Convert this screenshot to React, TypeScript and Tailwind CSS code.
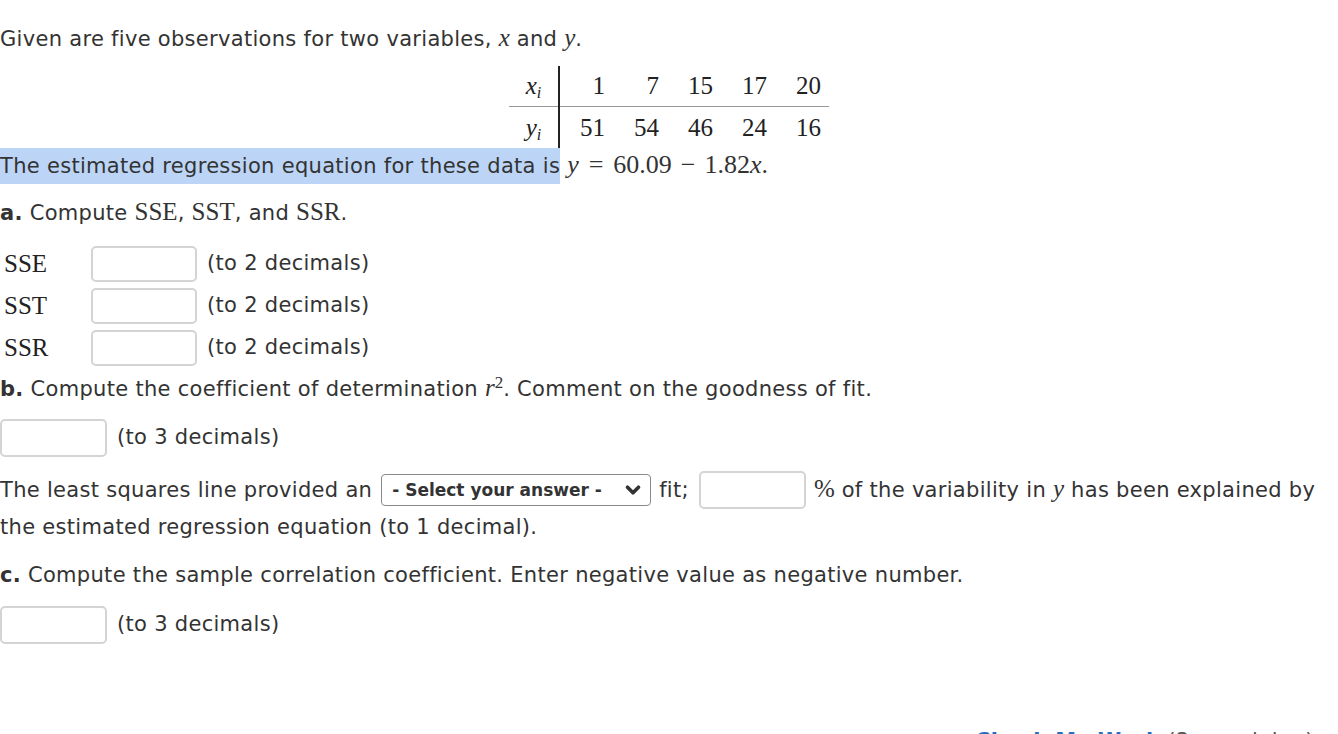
import React from 'react';
import { ChevronDown } from 'lucide-react';

const M: React.FC<{ children: React.ReactNode; className?: string }> = ({ children, className = '' }) => (
  <span className={`font-['Liberation_Serif',serif] text-[25px] leading-none tracking-normal ${className}`}>{children}</span>
);

const Box: React.FC<{ w?: string; h?: string }> = ({ w = 'w-[106px]', h = 'h-[36px]' }) => (
  <span className={`inline-block align-middle ${w} ${h} rounded-[5px] border-2 border-[#d4d4d4] bg-white`} />
);

const App: React.FC = () => {
  const xs = ['1', '7', '15', '17', '20'];
  const ys = ['51', '54', '46', '24', '16'];

  return (
    <div className="min-h-[734px] w-[1338px] overflow-hidden bg-white font-['DejaVu_Sans',sans-serif] text-[21px] tracking-[0.3px] text-[#333]">
      <div className="pt-[21px] leading-[36px]">
        Given are five observations for two variables, <M className="italic">x</M> and <M className="italic">y</M>.
      </div>

      {/* data table */}
      <div className="mt-[9px] flex justify-center">
        <table className="border-collapse font-['Liberation_Serif',serif] text-[25px] leading-none tracking-normal text-[#222]">
          <tbody>
            <tr className="h-[40px] border-b border-[#999]">
              <td className="w-[50px] border-r-2 border-[#222] text-center italic">
                x<sub className="text-[16px]">i</sub>
              </td>
              {xs.map((v) => (
                <td key={v} className="w-[54px] pr-[8px] text-right">{v}</td>
              ))}
            </tr>
            <tr className="h-[42px]">
              <td className="w-[50px] border-r-2 border-[#222] text-center italic">
                y<sub className="text-[16px]">i</sub>
              </td>
              {ys.map((v) => (
                <td key={v} className="w-[54px] pr-[8px] text-right">{v}</td>
              ))}
            </tr>
          </tbody>
        </table>
      </div>

      <div className="h-[36px] leading-[36px]">
        <span className="inline-block bg-[#bcd5f7]">The estimated regression equation for these data is</span>{' '}
        <M className="text-[26px] tracking-[1.5px]">
          <i>y</i>
          <span className="mx-[10px]">=</span>60.09<span className="mx-[9px]">−</span>1.82<i>x</i>.
        </M>
      </div>

      <div className="mt-[11px] h-[36px] leading-[36px]">
        <b>a.</b> Compute <M>SSE</M>, <M>SST</M>, and <M>SSR</M>.
      </div>

      <div className="mt-[12px]">
        {['SSE', 'SST', 'SSR'].map((l) => (
          <div key={l} className="flex h-[42px] items-center">
            <span className="w-[91px] pl-[4px] font-['Liberation_Serif',serif] text-[25px] tracking-normal text-[#222]">{l}</span>
            <Box />
            <span className="ml-[10px]">(to 2 decimals)</span>
          </div>
        ))}
      </div>

      <div className="mt-[2px] h-[36px] leading-[36px]">
        <b>b.</b> Compute the coefficient of determination <M className="italic">r</M>
        <sup className="font-['Liberation_Serif',serif] text-[17px] leading-none tracking-normal">2</sup>. Comment on the goodness of fit.
      </div>

      <div className="mt-[12px] flex items-center">
        <Box w="w-[107px]" h="h-[38px]" />
        <span className="ml-[10px]">(to 3 decimals)</span>
      </div>

      <div className="mt-[14px] leading-[37px]">
        <div className="flex h-[38px] items-center whitespace-nowrap">
          <span>The least squares line provided an&nbsp;</span>
          <span className="ml-[2px] inline-flex h-[32px] w-[270px] items-center justify-between rounded-[4px] border border-[#8a8a8a] pl-[10px] pr-[6px] text-[17px] font-bold tracking-normal text-[#333]">
            <span>- Select your answer -</span>
            <ChevronDown className="h-[22px] w-[22px]" strokeWidth={4} />
          </span>
          <span className="ml-[8px]">fit;</span>
          <span className="ml-[10px] inline-flex">
            <Box w="w-[107px]" h="h-[38px]" />
          </span>
          <span className="ml-[8px]">
            <M>%</M> of the variability in <M className="italic">y</M> has been explained by
          </span>
        </div>
        <div className="h-[38px]">the estimated regression equation (to 1 decimal).</div>
      </div>

      <div className="mt-[10px] h-[36px] leading-[36px]">
        <b>c.</b> Compute the sample correlation coefficient. Enter negative value as negative number.
      </div>

      <div className="mt-[13px] flex items-center">
        <Box w="w-[107px]" h="h-[38px]" />
        <span className="ml-[10px]">(to 3 decimals)</span>
      </div>

      <div className="mt-[79px] pl-[975px] leading-[36px]">
        <span className="font-bold text-[#2a6cc0]">Check My Work</span>{' '}
        <span className="text-[#555]">(3 remaining)</span>
      </div>
    </div>
  );
};

export default App;
